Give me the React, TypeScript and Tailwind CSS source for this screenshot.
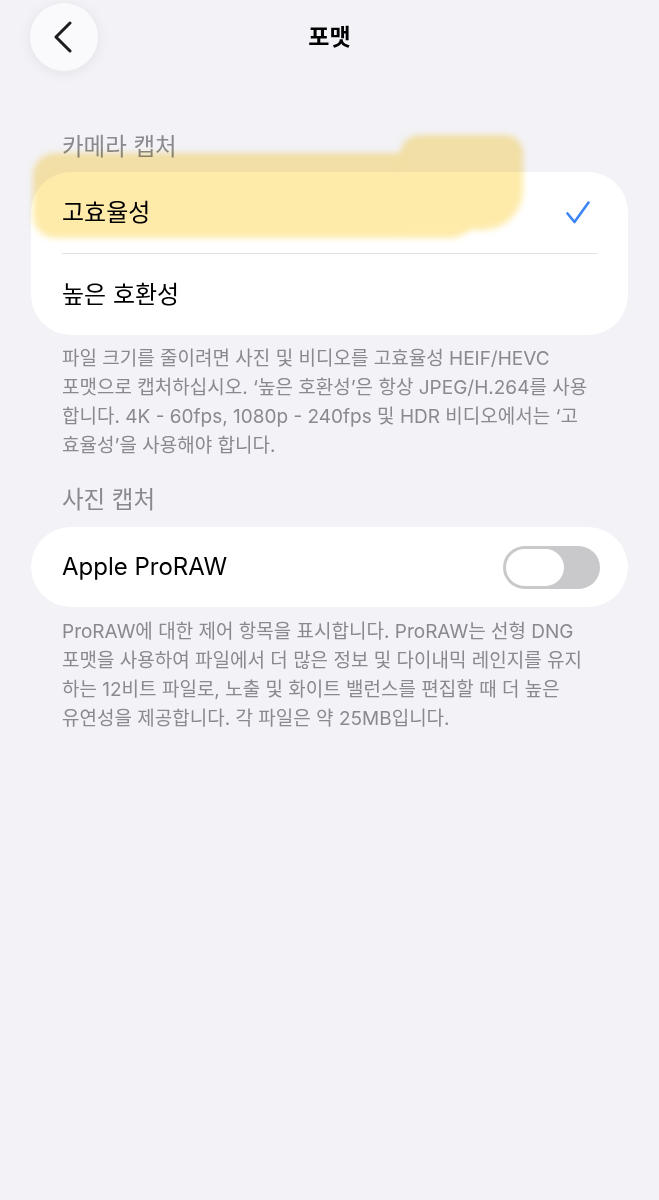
import React from 'react';

const FONT = { fontFamily: 'Inter, "Noto Sans CJK KR", sans-serif' };

const NOTE_1 = [
  '파일 크기를 줄이려면 사진 및 비디오를 고효율성 HEIF/HEVC',
  '포맷으로 캡처하십시오. ‘높은 호환성’은 항상 JPEG/H.264를 사용',
  '합니다. 4K - 60fps, 1080p - 240fps 및 HDR 비디오에서는 ‘고',
  '효율성’을 사용해야 합니다.',
];

const NOTE_2 = [
  'ProRAW에 대한 제어 항목을 표시합니다. ProRAW는 선형 DNG',
  '포맷을 사용하여 파일에서 더 많은 정보 및 다이내믹 레인지를 유지',
  '하는 12비트 파일로, 노출 및 화이트 밸런스를 편집할 때 더 높은',
  '유연성을 제공합니다. 각 파일은 약 25MB입니다.',
];

function Note({ lines }: { lines: string[] }) {
  return (
    <div className="px-[62px] text-[19px] leading-[29px] text-[#8a8a8e]">
      {lines.map(line => (
        <div key={line} className="whitespace-nowrap">{line}</div>
      ))}
    </div>
  );
}

function Check() {
  return (
    <svg width="24" height="23" viewBox="0 0 24 23" fill="none">
      <path d="M1.5 12.5L8.5 21L22.5 1.5" stroke="#3d84f5" strokeWidth="2.6" strokeLinecap="round" strokeLinejoin="round" />
    </svg>
  );
}

export default function App() {
  return (
    <div className="relative min-h-[1200px] bg-[#f2f2f7] text-black overflow-hidden" style={FONT}>
      {/* Nav */}
      <div className="grid grid-cols-[1fr_auto_1fr] items-center pt-[3px]">
        <div className="pl-[30px]">
          <button className="w-[68px] h-[68px] rounded-full bg-[#fafafc] shadow-[0_2px_14px_rgba(0,0,0,0.07)] flex items-center justify-center">
            <svg width="20" height="32" viewBox="0 0 20 32" fill="none" className="-ml-[3px]">
              <path d="M17 2L3 16L17 30" stroke="#1c1c1e" strokeWidth="3" strokeLinecap="round" strokeLinejoin="round" />
            </svg>
          </button>
        </div>
        <h1 className="text-[23px] font-semibold leading-[28px]">포맷</h1>
        <div />
      </div>

      {/* Camera capture */}
      <div className="mt-[62px] px-[62px] text-[23.5px] leading-[28px] text-[#8a8a8e]">카메라 캡처</div>
      <div className="mt-[11px] mx-[31px] bg-white rounded-[40px]">
        <div className="h-[81px] flex items-center justify-between pl-[31px] pr-[38px]">
          <span className="text-[24px]">고효율성</span>
          <Check />
        </div>
        <div className="mx-[31px] h-px bg-[#e2e2e6]" />
        <div className="h-[81px] flex items-center pl-[31px]">
          <span className="text-[24px]">높은 호환성</span>
        </div>
      </div>
      <div className="mt-[9px]">
        <Note lines={NOTE_1} />
      </div>

      {/* Photo capture */}
      <div className="mt-[26px] px-[62px] text-[23.5px] leading-[28px] text-[#8a8a8e]">사진 캡처</div>
      <div className="mt-[13px] mx-[31px] bg-white rounded-[40px] h-[80px] flex items-center justify-between pl-[31px] pr-[28px]">
        <span className="text-[24px]">Apple ProRAW</span>
        <div className="w-[97px] h-[43px] rounded-full bg-[#c9c9cc] p-[3px] flex items-center">
          <div className="w-[58px] h-[37px] rounded-full bg-white" />
        </div>
      </div>
      <div className="mt-[10px]">
        <Note lines={NOTE_2} />
      </div>

      {/* Marker highlight over the first option */}
      <div className="pointer-events-none absolute inset-0 mix-blend-multiply">
        <div className="absolute left-[33px] top-[153px] w-[440px] h-[85px] rounded-[22px] bg-[#feebaa] blur-[3px]" />
        <div className="absolute left-[400px] top-[135px] w-[123px] h-[95px] rounded-tl-[20px] rounded-tr-[18px] rounded-br-[40px] bg-[#feebaa] blur-[3px]" />
      </div>
    </div>
  );
}
